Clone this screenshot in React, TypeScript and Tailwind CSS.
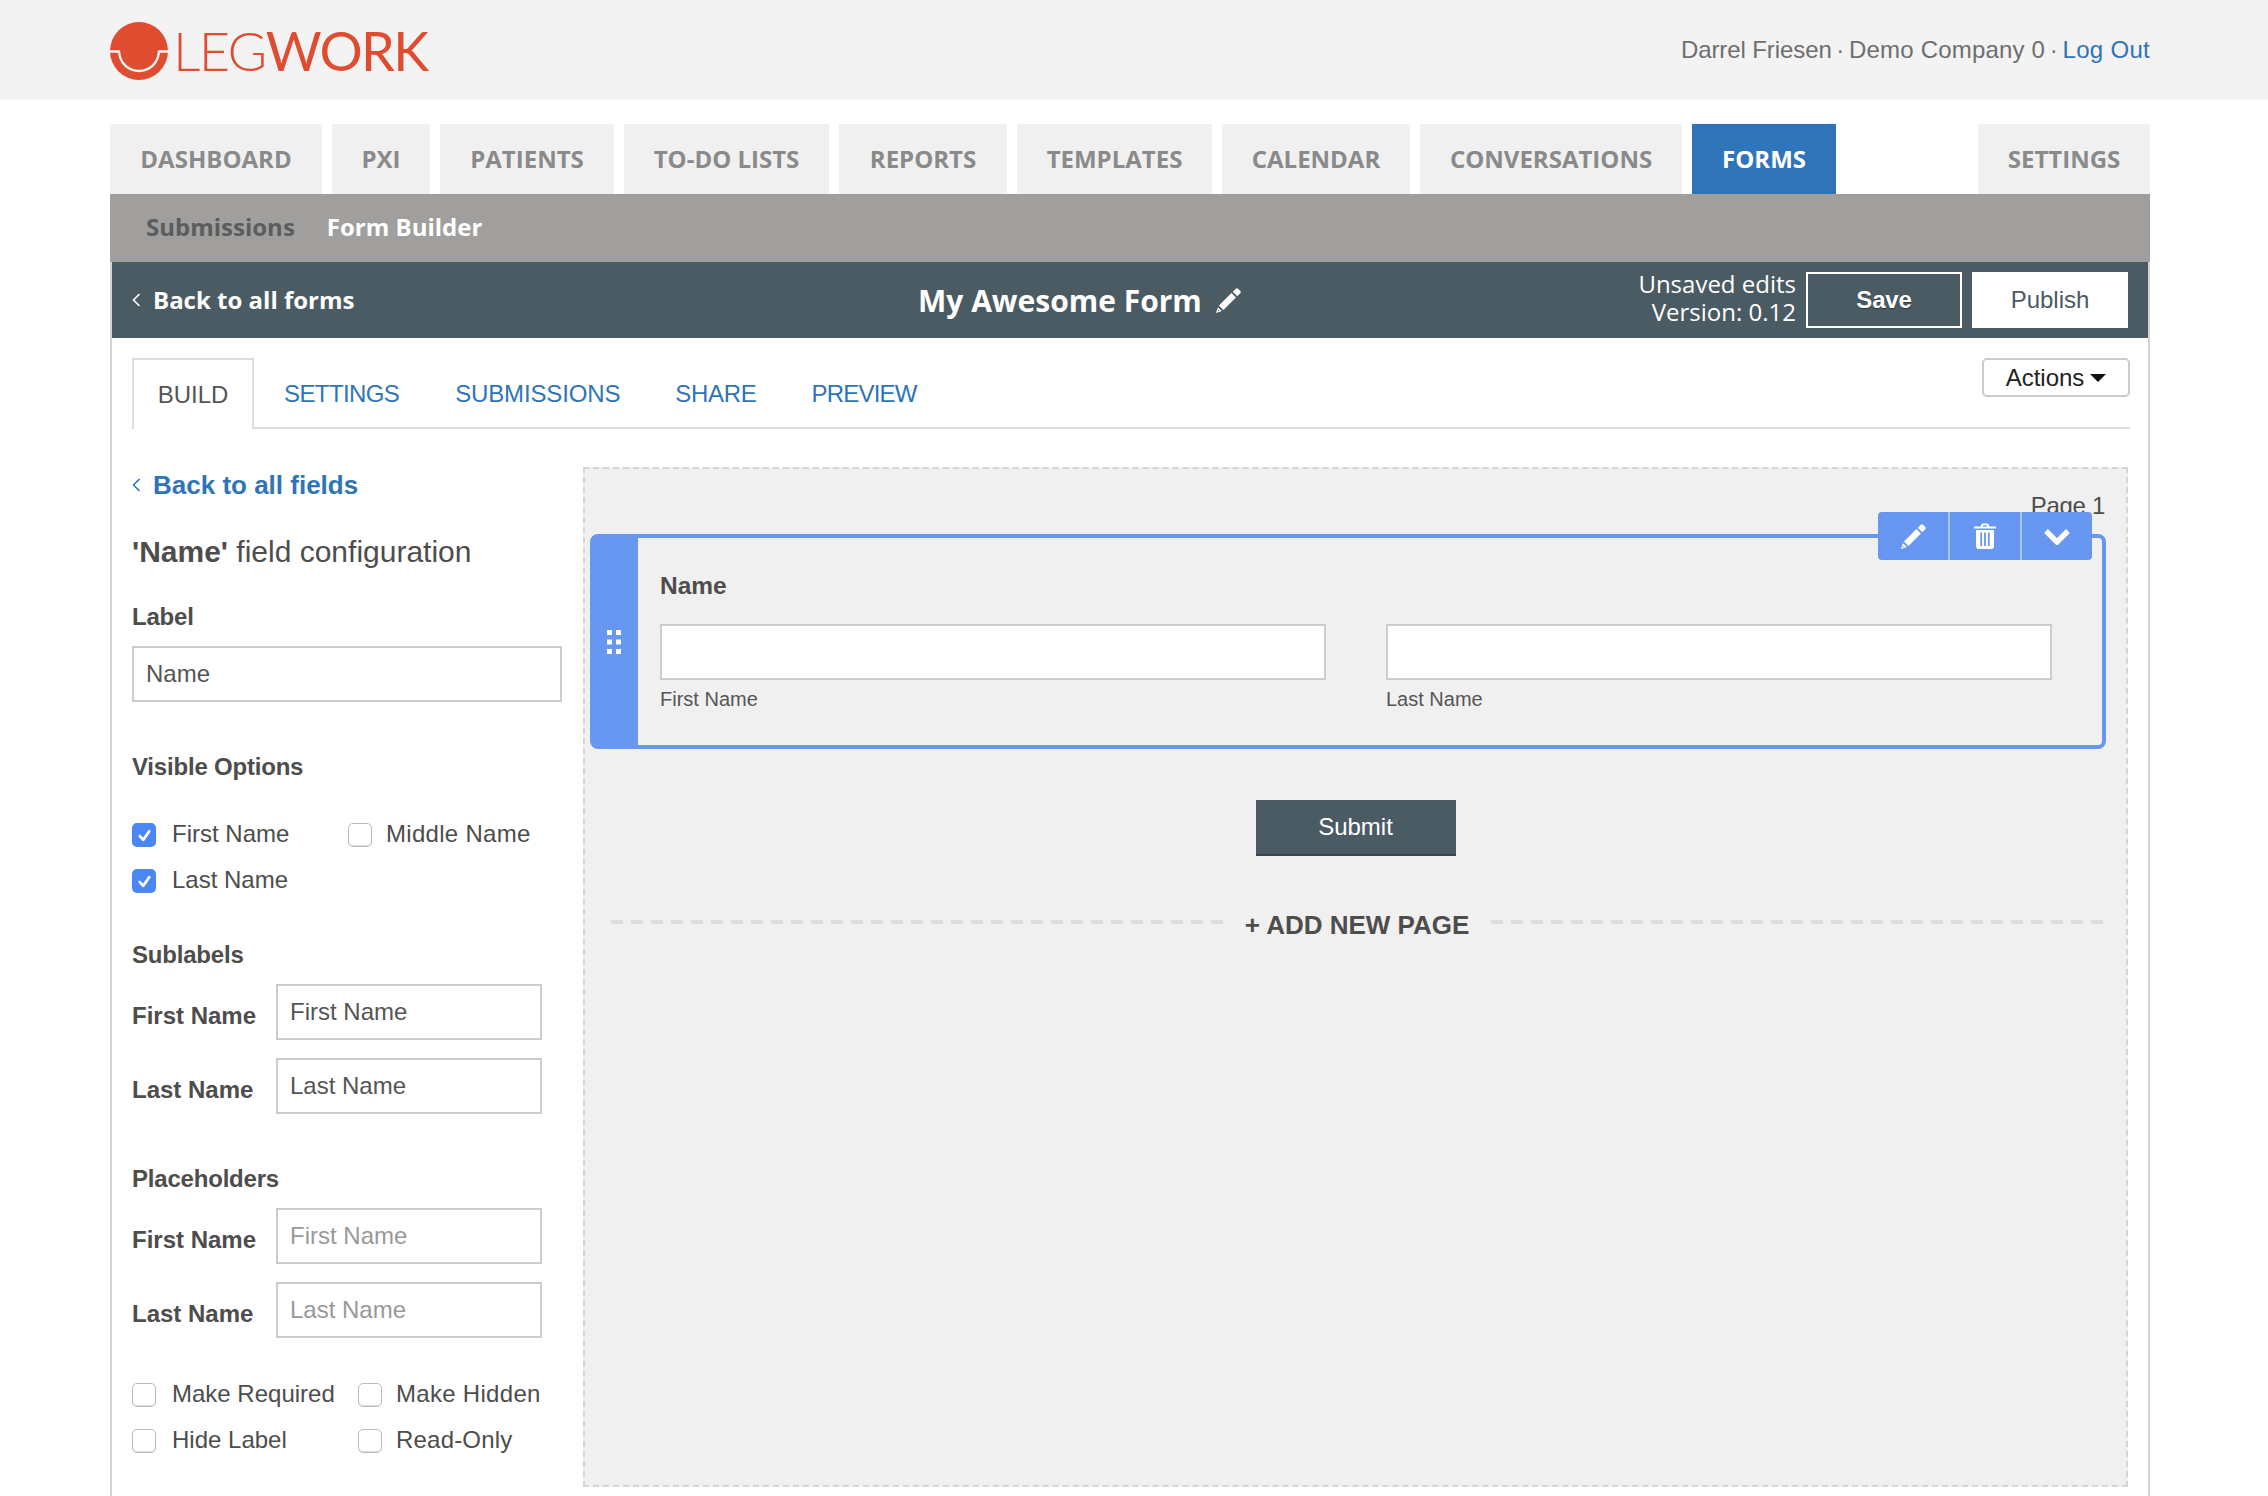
import React from "react";

const open = "font-['Open_Sans',sans-serif]";
const Tab = ({ t, active, w }: { t: string; active?: boolean; w: string }) => (
  <div className={`${w} h-[70px] flex items-center justify-center text-[24px] font-bold ${open} ${active ? "bg-[#3074b9] text-white" : "bg-[#f0f0f0] text-[#8a8a8a]"}`}>{t}</div>
);

const Chev = () => (
  <svg viewBox="0 0 9 14" className="w-[9px] h-[14px] shrink-0" fill="none" stroke="currentColor" strokeWidth="1.6"><path d="M7.5 1L1.5 7l6 6" /></svg>
);

const Pencil = ({ cls }: { cls: string }) => (
  <svg viewBox="0 0 24 24" className={cls} fill="white">
    <path d="M15.8 4.2L18.5 1.5Q19.5.5 20.5 1.5L22.5 3.5Q23.5 4.5 22.5 5.5L19.8 8.2Z" />
    <path d="M14.6 5.4L18.6 9.4 7.5 20.5 3.5 16.5Z" />
    <path fillRule="evenodd" d="M2.7 17.9L6.1 21.3.8 23.2ZM2.9 20.2L2.3 21.7 3.8 21.1Z" />
  </svg>
);

const Box = ({ checked }: { checked?: boolean }) =>
  checked ? (
    <span className="w-[24px] h-[24px] rounded-[5px] bg-[#4a86f5] flex items-center justify-center shrink-0 translate-y-[1px]">
      <svg viewBox="0 0 24 24" className="w-[21px] h-[21px]" fill="none" stroke="white" strokeWidth="3" strokeLinecap="round" strokeLinejoin="round"><path d="M6.5 12.5l4 4.5 7-10" /></svg>
    </span>
  ) : (
    <span className="w-[24px] h-[24px] rounded-[5px] border border-[#bdbdbd] bg-white shrink-0 translate-y-[1px] shadow-[inset_0_-1px_0_#ddd]" />
  );

const Check = ({ label, checked, w, gap }: { label: string; checked?: boolean; w: string; gap: string }) => (
  <div className={`${w} ${gap} flex items-center h-[32px] text-[24px] text-[#4d4d4b]`}><Box checked={checked} /><span>{label}</span></div>
);

const Input = ({ v, ph, cls }: { v?: string; ph?: boolean; cls: string }) => (
  <div className={`${cls} h-[56px] border-2 border-[#cccccc] bg-white pl-[12px] flex items-center text-[24px] ${ph ? "text-[#999999]" : "text-[#555555]"}`}>{v}</div>
);

const SubRow = ({ label, v, ph }: { label: string; v: string; ph?: boolean }) => (
  <div className="flex items-start h-[56px]">
    <span className="w-[144px] pt-[17px] text-[24px] leading-[30px] font-bold text-[#4d4d4b]">{label}</span>
    <Input v={v} ph={ph} cls="w-[266px]" />
  </div>
);

const H = ({ t, cls }: { t: string; cls: string }) => <div className={`${cls} text-[24px] leading-[30px] tracking-[-0.2px] font-bold text-[#4d4d4b]`}>{t}</div>;

export default function App() {
  return (
    <div className="w-[2268px] h-[1496px] overflow-hidden bg-white font-['Liberation_Sans',sans-serif]">
      <header className="h-[100px] bg-[#f3f3f3] pl-[110px] pr-[118px] flex items-center justify-between">
        <div className="flex items-center relative top-[1px]">
          <svg viewBox="0 0 58 58" className="w-[58px] h-[58px] shrink-0">
            <circle cx="29" cy="29" r="29" fill="#e04c30" />
            <path d="M0 29.5H9 C10 42 19 49 29 49 C39 49 48 42 49 29.5H58" fill="none" stroke="#f3f3f3" strokeWidth="2.4" />
          </svg>
          <span className="ml-[5px] font-['Lato',sans-serif] text-[54px] leading-none text-[#e04c30] tracking-[-1.6px]"><span className="font-light">LEG</span><span className="font-normal">WORK</span></span>
        </div>
        <div className="text-[24px] text-[#6e6e6e]">
          <span className="tracking-[-0.1px]">Darrel Friesen</span>
          <span className="-mx-[2px]"> · </span>
          <span className="tracking-[0.2px]">Demo Company 0</span>
          <span className="-mx-[2px]"> · </span>
          <span className="tracking-[0.3px] text-[#2f74b8]">Log Out</span>
        </div>
      </header>

      <div className="ml-[110px] w-[2040px] mt-[24px]">
        <nav className="flex gap-[10px]">
          <Tab t="DASHBOARD" w="w-[212px]" />
          <Tab t="PXI" w="w-[98px]" />
          <Tab t="PATIENTS" w="w-[174px]" />
          <Tab t="TO-DO LISTS" w="w-[205px]" />
          <Tab t="REPORTS" w="w-[168px]" />
          <Tab t="TEMPLATES" w="w-[195px]" />
          <Tab t="CALENDAR" w="w-[188px]" />
          <Tab t="CONVERSATIONS" w="w-[262px]" />
          <Tab t="FORMS" w="w-[144px]" active />
          <div className="flex-1" />
          <Tab t="SETTINGS" w="w-[172px]" />
        </nav>
        <div className={`h-[68px] bg-[#a09f9d] pl-[36px] pb-[2px] flex items-center gap-[32px] text-[24px] font-bold ${open}`}>
          <span className="text-[#5c5c5c]">Submissions</span>
          <span className="text-white">Form Builder</span>
        </div>

        <div className="h-[1234px] border-x-2 border-[#d5d5d5]">
          <div className="h-[76px] bg-[#4b5b63] flex items-center pl-[20px] pr-[20px] text-white">
            <div className="w-[786px] shrink-0 flex items-center">
              <Chev />
              <span className={`ml-[12px] text-[24px] font-bold ${open}`}>Back to all forms</span>
            </div>
            <div className={`flex items-center gap-[13px] text-[30px] font-bold ${open}`}>
              <span className="leading-[40px] relative top-[1px]">My Awesome Form</span>
              <Pencil cls="w-[27px] h-[27px]" />
            </div>
            <div className={`ml-auto text-right text-[24px] leading-[28px] ${open} mr-[10px] -mt-[4px]`}>
              <div>Unsaved edits</div>
              <div>Version: 0.12</div>
            </div>
            <button className="w-[156px] h-[56px] border-2 border-white text-[24px] font-bold tracking-[-0.2px] text-white [text-shadow:0_1px_1px_rgba(0,0,0,0.4)]">Save</button>
            <button className="ml-[10px] w-[156px] h-[56px] bg-white text-[24px] text-[#4b5b63]">Publish</button>
          </div>

          <div className="pl-[20px] pr-[18px]">
            <div className="h-[91px] pt-[20px] relative">
              <div className="flex h-[71px] border-b-2 border-[#dddddd] text-[24px] text-[#2f74b8]">
                <div className="w-[122px] h-[71px] border-2 border-b-0 border-[#dddddd] bg-white text-[#555555] flex items-center justify-center">BUILD</div>
                <span className="ml-[30px] pt-[18px] tracking-[-0.6px]">SETTINGS</span>
                <span className="ml-[56px] pt-[18px] tracking-[-0.15px]">SUBMISSIONS</span>
                <span className="ml-[55px] pt-[18px] tracking-[-0.3px]">SHARE</span>
                <span className="ml-[55px] pt-[18px] tracking-[-0.8px]">PREVIEW</span>
              </div>
              <button className="absolute right-0 top-[20px] w-[148px] h-[39px] border-2 border-[#cccccc] rounded-[5px] text-[24px] text-[#222222] flex items-center justify-center gap-[6px] bg-white">
                Actions
                <svg viewBox="0 0 16 8" className="w-[16px] h-[8px]"><path d="M0 0h16L8 8z" fill="#111" /></svg>
              </button>
            </div>

            <div className="flex mt-[38px]">
              <div className="w-[451px] shrink-0">
                <div className="flex items-center h-[30px] mt-[3px] text-[#2f74b8]">
                  <Chev />
                  <span className="ml-[12px] text-[26px] font-bold">Back to all fields</span>
                </div>
                <div className="mt-[34px] text-[30px] leading-[36px] text-[#4d4d4b]"><b>'Name'</b> field configuration</div>
                <H t="Label" cls="mt-[32px]" />
                <Input v="Name" cls="w-[430px] mt-[14px]" />

                <H t="Visible Options" cls="mt-[50px]" />
                <div className="flex mt-[36px]"><Check label="First Name" checked w="w-[216px]" gap="gap-[16px]" /><Check label="Middle Name" w="w-[220px]" gap="gap-[14px] tracking-[0.3px]" /></div>
                <div className="flex mt-[14px]"><Check label="Last Name" checked w="w-[216px]" gap="gap-[16px]" /></div>

                <H t="Sublabels" cls="mt-[44px]" />
                <div className="mt-[14px] flex flex-col gap-[18px]">
                  <SubRow label="First Name" v="First Name" />
                  <SubRow label="Last Name" v="Last Name" />
                </div>

                <H t="Placeholders" cls="mt-[50px]" />
                <div className="mt-[14px] flex flex-col gap-[18px]">
                  <SubRow label="First Name" v="First Name" ph />
                  <SubRow label="Last Name" v="Last Name" ph />
                </div>

                <div className="flex mt-[40px]"><Check label="Make Required" w="w-[226px]" gap="gap-[16px]" /><Check label="Make Hidden" w="w-[210px]" gap="gap-[14px] tracking-[0.3px]" /></div>
                <div className="flex mt-[14px]"><Check label="Hide Label" w="w-[226px]" gap="gap-[16px]" /><Check label="Read-Only" w="w-[210px]" gap="gap-[14px] tracking-[0.2px]" /></div>
              </div>

              <div className="w-[1545px] h-[1020px] border-2 border-dashed border-[#d5d5d5] bg-[#f0f0f0]">
                <div className="text-right pr-[21px] pt-[23px] text-[24px] leading-[28px] tracking-[-0.3px] text-[#4d4d4b] h-[65px]">Page 1</div>
                <div className="ml-[5px] w-[1516px] h-[215px] rounded-[8px] border-[4px] border-[#6797f0] flex relative">
                  <div className="w-[45px] bg-[#6797f0] -ml-[1px] -my-[1px] flex items-center justify-center">
                    <svg viewBox="0 0 16 26" className="w-[16px] h-[26px] -ml-[3px]" fill="white">
                      <rect x="1" y="1" width="5" height="5" /><rect x="10" y="1" width="5" height="5" />
                      <rect x="1" y="10.5" width="5" height="5" /><rect x="10" y="10.5" width="5" height="5" />
                      <rect x="1" y="20" width="5" height="5" /><rect x="10" y="20" width="5" height="5" />
                    </svg>
                  </div>
                  <div className="flex-1 pl-[22px]">
                    <div className="mt-[33px] text-[24.5px] leading-[30px] font-bold text-[#4d4d4b]">Name</div>
                    <div className="flex gap-[60px] mt-[23px]">
                      <div className="w-[666px]">
                        <div className="h-[56px] border-2 border-[#cccccc] bg-white" />
                        <div className="mt-[7px] text-[20px] leading-[24px] text-[#555555]">First Name</div>
                      </div>
                      <div className="w-[666px]">
                        <div className="h-[56px] border-2 border-[#cccccc] bg-white" />
                        <div className="mt-[7px] text-[20px] leading-[24px] text-[#555555]">Last Name</div>
                      </div>
                    </div>
                  </div>
                  <div className="absolute right-[10px] -top-[26px] w-[214px] h-[48px] rounded-[4px] bg-[#6797f0] flex text-white">
                    <div className="flex-1 flex items-center justify-center border-r-2 border-[#a9c5f6]"><Pencil cls="w-[27px] h-[27px]" /></div>
                    <div className="flex-1 flex items-center justify-center border-r-2 border-[#a9c5f6]">
                      <svg viewBox="0 0 24 26" className="w-[24px] h-[26px]" fill="white">
                        <path d="M8 3.5V2.4C8 1.3 8.9.5 10 .5h4c1.1 0 2 .8 2 1.9v1.1h7v2H1v-2zM10 3.5h4V2.3h-4z" fillRule="evenodd" />
                        <path fillRule="evenodd" d="M3 7h18v16c0 1.7-1 3-2.6 3H5.6C4 26 3 24.7 3 23zM7.3 9.5v13.5h1.8V9.5zM11.1 9.5v13.5h1.8V9.5zM14.9 9.5v13.5h1.8V9.5z" />
                      </svg>
                    </div>
                    <div className="flex-1 flex items-center justify-center">
                      <svg viewBox="0 0 26 17" className="w-[26px] h-[17px]" fill="none" stroke="white" strokeWidth="5.4"><path d="M2 3l11 11L24 3" /></svg>
                    </div>
                  </div>
                </div>
                <button className="block mx-auto mt-[51px] w-[200px] h-[56px] bg-[#4b5b63] border-b-2 border-[#3a464d] text-[24px] text-white">Submit</button>
                <div className="mt-[51px] flex items-center pl-[21px] pr-[18px]">
                  <div className="flex-1 h-[4px] -mt-[6px] bg-[repeating-linear-gradient(270deg,#dddddd_0_12px,transparent_12px_20px)]" />
                  <span className="mx-[22px] text-[26px] leading-[36px] font-bold text-[#4d4d4b]">+ ADD NEW PAGE</span>
                  <div className="flex-1 h-[4px] -mt-[6px] bg-[repeating-linear-gradient(90deg,#dddddd_0_12px,transparent_12px_20px)]" />
                </div>
              </div>
            </div>
          </div>
        </div>
      </div>
    </div>
  );
}
